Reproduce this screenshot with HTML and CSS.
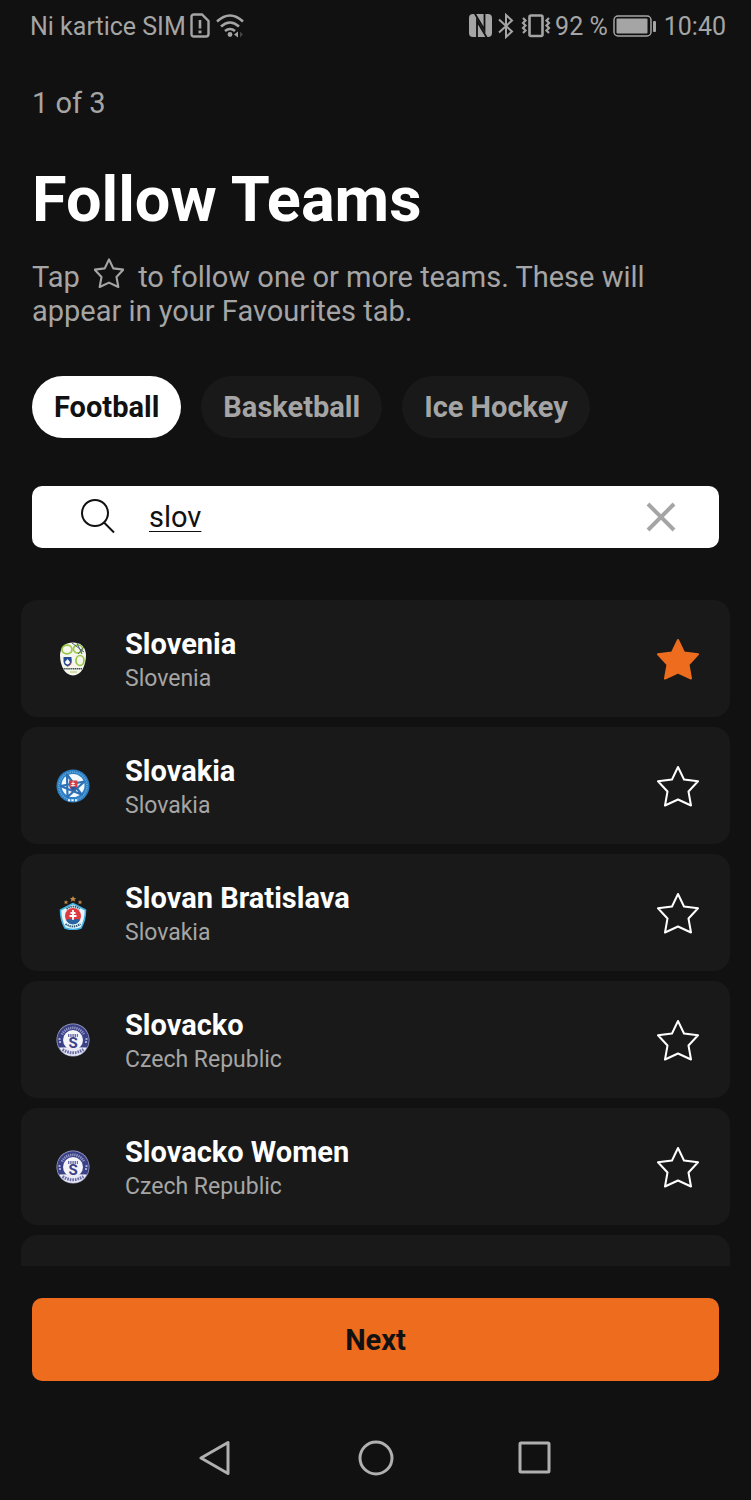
FILE: index.html
```
<!DOCTYPE html>
<html lang="en">
<head>
  <meta charset="UTF-8">
  <meta name="viewport" content="width=device-width, initial-scale=1.0">
  <title>Follow Teams</title>
  <link rel="stylesheet" href="styles.css">
</head>
<body>
  <!-- shared shapes -->
  <svg class="defs" aria-hidden="true">
    <symbol id="star" viewBox="0 0 42 42">
      <path d="M21 2 L27 14.5 L41 16.3 L31.5 26.5 L34 40.5 L21 34.5 L8 40.5 L10.5 26.5 L1 16.3 L15 14.5 Z" stroke-linejoin="round"/>
    </symbol>
    <symbol id="slovacko" viewBox="0 0 34 34">
      <circle cx="17" cy="17" r="16.5" fill="#a9acd0"/>
      <circle cx="17" cy="17" r="15.8" fill="#3b4187"/>
      <path d="M6 11.500A12.400 12.400 0 0 1 28 11.500" fill="none" stroke="#9a9dc8" stroke-width="2.600" stroke-dasharray="1.200 0.900"/>
      <path d="M2.500 16h2M3 19h2M29.500 16h2M29 19h2" stroke="#c9cbe2" stroke-width="1.300"/>
      <circle cx="17" cy="17" r="10" fill="#f4f4fb"/>
      <path d="M3 24.500Q17 24 31 24.500Q26.500 33 17 33Q7.500 33 3 24.500Z" fill="#e9eaf4"/>
      <path d="M6.500 26.500Q17 33 27.500 26.500" fill="none" stroke="#6a6ea8" stroke-width="3" stroke-dasharray="1.700 0.900"/>
      <path d="M12 12.500h10" stroke="#6a6ea8" stroke-width="3" stroke-dasharray="1.400 0.800"/>
      <text x="17" y="25" text-anchor="middle" font-size="15" font-weight="bold" fill="#3b4187">S</text>
    </symbol>
  </svg>

  <div class="screen">
    <div class="status">
      <div class="status-left">
        <span>Ni kartice SIM</span>
        <svg width="22" height="28" viewBox="0 0 22 28" fill="none" stroke="#a5a5a5" stroke-width="2.400">
          <path d="M5 2.500H13L19.500 9V22Q19.500 24.500 17 24.500H5Q2.500 24.500 2.500 22V5Q2.500 2.500 5 2.500Z"/>
          <path d="M11 8v8.500" stroke-width="2.600"/>
          <path d="M11 18.500v2.800" stroke-width="3"/>
        </svg>
        <svg class="wifi" width="28" height="28" viewBox="0 0 28 28" fill="none" stroke="#a5a5a5" stroke-width="2.600">
          <path d="M1 9.500Q14 -2.500 27 9.500M5 14.500Q14 6.500 23 14.500M9 19Q14 15 19 19"/>
          <circle cx="14" cy="22.500" r="2.400" fill="#a5a5a5" stroke="none"/>
          <path d="M22 19.500v6l-4-3z" fill="#a5a5a5" stroke="none"/>
          <path d="M24 19.500v6l3-3z" fill="#444" stroke="none"/>
        </svg>
      </div>
      <div class="status-right">
        <svg width="24" height="26" viewBox="0 0 24 26">
          <rect x="0" y="1" width="23" height="23" rx="4" fill="#a5a5a5"/>
          <path d="M5.500 0L15.500 17V0M18 25L8 8V25" fill="none" stroke="#111" stroke-width="1.800"/>
        </svg>
        <svg width="20" height="26" viewBox="0 0 20 26" fill="none" stroke="#a5a5a5" stroke-width="2">
          <path d="M2 6.500L15 18.500L9 24V2L15 7.500L2 19.500"/>
        </svg>
        <svg width="30" height="26" viewBox="0 0 30 26" fill="none" stroke="#a5a5a5">
          <rect x="8.500" y="2.500" width="13" height="20.500" rx="1.500" stroke-width="2.600"/>
          <path d="M2 5l2.500 2.500-2.500 2.500 2.500 2.500-2.500 2.500 2.500 2.500-2.500 2.500M28 5l-2.500 2.500 2.500 2.500-2.500 2.500 2.500 2.500-2.500 2.500 2.500 2.500" stroke-width="2.200"/>
        </svg>
        <span>92 %</span>
        <svg class="battery" width="44" height="24" viewBox="0 0 44 24">
          <rect x="2" y="2" width="37" height="20" rx="4" fill="none" stroke="#a5a5a5" stroke-width="1.500"/>
          <rect x="4.500" y="4.500" width="31" height="15" rx="1" fill="#a5a5a5"/>
          <rect x="41" y="7" width="3" height="11" rx="1" fill="#a5a5a5"/>
        </svg>
        <span>10:40</span>
      </div>
    </div>

    <header class="intro">
      <p class="step">1 of 3</p>
      <h1>Follow Teams</h1>
      <p class="hint">Tap <svg class="hint-star" aria-hidden="true"><use href="#star"/></svg> to follow one or more teams. These will appear in your Favourites tab.</p>
    </header>

    <nav class="sports">
      <button type="button" class="sport active">Football</button>
      <button type="button" class="sport">Basketball</button>
      <button type="button" class="sport">Ice Hockey</button>
    </nav>

    <form class="search">
      <label for="team-search" aria-label="Search teams">
        <svg width="36" height="36" viewBox="0 0 36 36" fill="none" stroke="#111" stroke-width="2">
          <circle cx="15" cy="14" r="13"/>
          <path d="M24 23.500L34 33.500"/>
        </svg>
      </label>
      <input id="team-search" type="text" value="slov" autocomplete="off" spellcheck="false">
      <button type="button" class="clear" aria-label="Clear">
        <svg width="30" height="30" viewBox="0 0 30 30" stroke="#a5a5a5" stroke-width="4">
          <path d="M2 2L28 28M28 2L2 28"/>
        </svg>
      </button>
    </form>

    <ul class="teams">
      <li class="team">
        <svg class="crest" viewBox="0 0 34 34">
          <path d="M17 0.500C24 0.500 29.500 4 30 13C30 24 25 33.500 17 33.500C9 33.500 4 24 4 13C4.500 4 10 0.500 17 0.500Z" fill="#f5f7ee"/>
          <g fill="none" stroke="#9ac545" stroke-width="1.700">
            <ellipse cx="11" cy="7.500" rx="5" ry="4.300"/>
            <ellipse cx="22" cy="7" rx="4.500" ry="4"/>
            <ellipse cx="24" cy="18.500" rx="4" ry="5"/>
          </g>
          <path d="M16 1l12 9M21 1l5 11M28 5l-6 7" stroke="#4d6470" stroke-width="1" fill="none"/>
          <path d="M7.500 15H15.500V19Q15.500 23 11.500 24.500Q7.500 23 7.500 19Z" fill="#244a91"/>
          <path d="M9 20l2.500-3 2.500 3q0 1.500-2.500 2.500Q9 21.500 9 20Z" fill="#fff"/>
          <path d="M15.500 17v3q0 3-4 4.500" fill="none" stroke="#c44b4b" stroke-width="0.800"/>
          <path d="M7.500 26.700H26" stroke="#42504b" stroke-width="1.600" stroke-dasharray="1.400 0.500"/>
          <path d="M14 30H21" stroke="#c6d78b" stroke-width="1.500"/>
        </svg>
        <div class="info">
          <h2>Slovenia</h2>
          <p>Slovenia</p>
        </div>
        <button type="button" class="follow on" aria-label="Unfollow Slovenia"><svg><use href="#star"/></svg></button>
      </li>
      <li class="team">
        <svg class="crest" viewBox="0 0 34 34">
          <circle cx="17" cy="17" r="16.500" fill="#2c7fc4"/>
          <circle cx="17" cy="17" r="14" fill="none" stroke="#6aaddd" stroke-width="1.600" stroke-dasharray="1.200 1.100"/>
          <circle cx="17" cy="16.500" r="11.500" fill="#f3f8fc"/>
          <path d="M11 5.500L25.500 25.500L4.500 17L28.500 12.500L11.500 28Z" fill="none" stroke="#2c70b5" stroke-width="2.200" stroke-linejoin="round"/>
          <path d="M13 11.500H21.500V17Q20.500 20 17 21.500Q14 20 13 17Z" fill="#d63c45"/>
          <path d="M17 12.500v6M15.300 14.500h3.500M14.700 16.700h4.600" stroke="#fff" stroke-width="0.900"/>
          <path d="M14 18.500q3.200-2 6.500 0q-1.500 2.300-3.300 3q-2-.700-3.200-3Z" fill="#28599a"/>
          <path d="M12 31.300H22" stroke="#e5f1fa" stroke-width="2" stroke-dasharray="2.200 1.300"/>
        </svg>
        <div class="info">
          <h2>Slovakia</h2>
          <p>Slovakia</p>
        </div>
        <button type="button" class="follow" aria-label="Follow Slovakia"><svg><use href="#star"/></svg></button>
      </li>
      <li class="team">
        <svg class="crest" viewBox="0 0 34 34">
          <path d="M17 0l1 2h2.200l-1.700 1.500.700 2.200L17 4.500l-2.200 1.200.700-2.200L13.800 2H16ZM10 4l.700 1.500h1.600l-1.200 1.100.400 1.600-1.500-.900-1.500.900.400-1.600-1.200-1.100h1.600ZM24 4l.700 1.500h1.600l-1.200 1.100.400 1.600-1.500-.900-1.500.900.400-1.600-1.200-1.100h1.600Z" fill="#c08a45"/>
          <path d="M17 7.500L29.500 14Q29.500 24 25 32Q17 35 9 32Q4.500 24 4.500 14Z" fill="#e6f6fc" stroke="#41afe0" stroke-width="1.600" stroke-linejoin="round"/>
          <path d="M10.500 13Q17 8 23.500 13" fill="none" stroke="#315d79" stroke-width="1.800" stroke-dasharray="1.500 0.700"/>
          <circle cx="17" cy="20" r="8" fill="#df3a40"/>
          <path d="M17 14v10M14.500 17h5M13.500 20h7" stroke="#fff" stroke-width="1.800"/>
          <path d="M10 24q3-2 7 0q4-2 7 0q-2 4-7 4.500Q12 28 10 24Z" fill="#2864a1"/>
          <path d="M9.500 28Q17 33 24.500 28" fill="none" stroke="#315d79" stroke-width="2" stroke-dasharray="1.500 0.700"/>
        </svg>
        <div class="info">
          <h2>Slovan Bratislava</h2>
          <p>Slovakia</p>
        </div>
        <button type="button" class="follow" aria-label="Follow Slovan Bratislava"><svg><use href="#star"/></svg></button>
      </li>
      <li class="team">
        <svg class="crest"><use href="#slovacko"/></svg>
        <div class="info">
          <h2>Slovacko</h2>
          <p>Czech Republic</p>
        </div>
        <button type="button" class="follow" aria-label="Follow Slovacko"><svg><use href="#star"/></svg></button>
      </li>
      <li class="team">
        <svg class="crest"><use href="#slovacko"/></svg>
        <div class="info">
          <h2>Slovacko Women</h2>
          <p>Czech Republic</p>
        </div>
        <button type="button" class="follow" aria-label="Follow Slovacko Women"><svg><use href="#star"/></svg></button>
      </li>
      <li class="team"></li>
    </ul>

    <button type="button" class="next">Next</button>

    <nav class="system">
      <button type="button" aria-label="Back">
        <svg width="36" height="36" viewBox="0 0 36 36"><path d="M29 2.500V33.500L2 18Z"/></svg>
      </button>
      <button type="button" aria-label="Home">
        <svg width="36" height="36" viewBox="0 0 36 36"><circle cx="18" cy="18" r="16"/></svg>
      </button>
      <button type="button" aria-label="Recent apps">
        <svg width="36" height="36" viewBox="0 0 36 36"><rect x="3" y="3" width="29" height="29" rx="1"/></svg>
      </button>
    </nav>
  </div>
</body>
</html>
```
FILE: styles.css
```
* {
  box-sizing: border-box;
  margin: 0;
  padding: 0;
}
body {
  background: #111;
  color: #fff;
  font-family: Roboto, "Liberation Sans", sans-serif;
}
button {
  border: 0;
  background: none;
  font-family: inherit;
  cursor: pointer;
}
svg {
  display: block;
}
.defs {
  position: absolute;
  width: 0;
  height: 0;
}
.screen {
  display: flex;
  flex-direction: column;
  height: 100vh;
}

/* status bar */
.status {
  display: flex;
  justify-content: space-between;
  align-items: center;
  height: 52px;
  padding: 0 25px 0 30px;
  color: #a5a5a5;
  font-size: 25px;
  flex-shrink: 0;
}
.status-left, .status-right {
  display: flex;
  align-items: center;
}
.status-left {
  gap: 3px;
}
.status-right {
  gap: 4px;
}
.wifi {
  margin-left: 2px;
}
.battery {
  margin-right: 4px;
}

/* intro */
.intro {
  padding: 34px 32px 0;
}
.step, .hint {
  color: #a5a5a5;
  font-size: 29px;
  line-height: 34px;
}
h1 {
  margin-top: 42px;
  font-size: 63px;
  line-height: 76px;
}
.hint {
  margin-top: 20px;
}
.hint-star {
  display: inline-block;
  width: 30px;
  height: 30px;
  margin: 0 7px;
  vertical-align: -1px;
  fill: none;
  stroke: #a5a5a5;
  stroke-width: 3px;
}

/* sport tabs */
.sports {
  display: flex;
  gap: 20px;
  padding: 48px 32px 0;
}
.sport {
  height: 62px;
  padding: 0 22px;
  border-radius: 31px;
  background: #191919;
  color: #a5a5a5;
  font-size: 29px;
  font-weight: bold;
}
.sport.active {
  background: #fff;
  color: #111;
}

/* search */
.search {
  display: flex;
  align-items: center;
  height: 62px;
  margin: 48px 32px 52px;
  padding: 0 43px 0 48px;
  border-radius: 10px;
  background: #fff;
  flex-shrink: 0;
}
.search input {
  flex: 1;
  min-width: 0;
  margin-left: 33px;
  border: 0;
  outline: 0;
  background: none;
  color: #111;
  font-family: inherit;
  font-size: 29px;
  text-decoration: underline;
  text-decoration-thickness: 1px;
  text-underline-offset: 4px;
}

/* team list */
.teams {
  display: flex;
  flex-direction: column;
  flex: 1;
  gap: 10px;
  min-height: 0;
  margin: 0 21px;
  overflow-y: auto;
  scrollbar-width: none;
  list-style: none;
}
.team {
  display: flex;
  align-items: center;
  flex-shrink: 0;
  height: 117px;
  padding: 0 31px 0 35px;
  border-radius: 16px;
  background: #191919;
}
.crest {
  width: 34px;
  height: 34px;
}
.info {
  flex: 1;
  margin-left: 35px;
  padding-top: 4px;
}
.info h2 {
  font-size: 29px;
  line-height: 36px;
}
.info p {
  color: #a5a5a5;
  font-size: 23px;
  line-height: 34px;
}
.follow svg {
  width: 42px;
  height: 42px;
  fill: none;
  stroke: #fff;
  stroke-width: 2px;
}
.follow.on svg {
  fill: #ee6c1e;
  stroke: #ee6c1e;
}

/* bottom */
.next {
  flex-shrink: 0;
  height: 83px;
  margin: 32px 32px 0;
  border-radius: 10px;
  background: #ee6c1e;
  color: #111;
  font-size: 29px;
  font-weight: bold;
}
.system {
  display: flex;
  justify-content: center;
  align-items: center;
  gap: 123px;
  flex-shrink: 0;
  height: 119px;
  padding-top: 34px;
}
.system svg {
  fill: none;
  stroke: #b0b0b0;
  stroke-width: 3px;
  stroke-linejoin: round;
}
```
